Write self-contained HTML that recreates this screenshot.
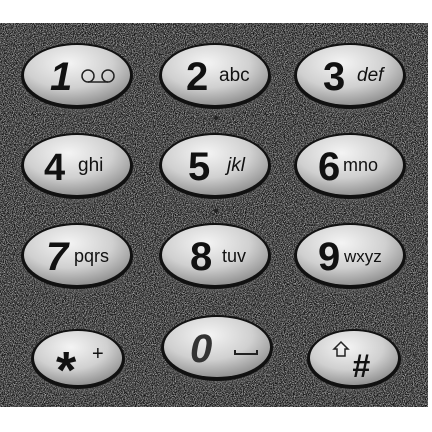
<!DOCTYPE html>
<html><head><style>html,body{margin:0;padding:0;background:#fff;width:432px;height:432px;overflow:hidden}</style></head>
<body>
<svg width="432" height="432" viewBox="0 0 432 432" xmlns="http://www.w3.org/2000/svg" font-family="Liberation Sans, sans-serif">
<defs>
<filter id="n" x="0" y="0" width="100%" height="100%" color-interpolation-filters="sRGB">
<feTurbulence type="fractalNoise" baseFrequency="1.1" numOctaves="2" seed="3"/>
<feColorMatrix type="matrix" values="2.4 0 0 0 -0.85  2.4 0 0 0 -0.85  2.4 0 0 0 -0.85  0 0 0 0 1"/>
</filter>
<radialGradient id="k" cx="0.42" cy="0.3" r="0.75">
<stop offset="0" stop-color="#f4f4f4"/><stop offset="0.55" stop-color="#d0d0d0"/><stop offset="1" stop-color="#8a8a8a"/>
</radialGradient>
<radialGradient id="h" cx="0.5" cy="0.5" r="0.5">
<stop offset="0.7" stop-color="#6a6a6a" stop-opacity="0.6"/><stop offset="1" stop-color="#555" stop-opacity="0"/>
</radialGradient>
</defs>
<rect x="0" y="23" width="428" height="384" fill="#333"/>
<rect x="0" y="23" width="428" height="384" filter="url(#n)" opacity="0.65"/>
<g>
<g><ellipse cx="77" cy="78" rx="64" ry="40" fill="url(#h)"/><ellipse cx="77" cy="76" rx="56" ry="33" fill="#111"/><ellipse cx="77" cy="75" rx="53" ry="30" fill="url(#k)"/>
<text x="50" y="90" font-size="40" font-style="italic" font-weight="bold" fill="#111">1</text>
<circle cx="88" cy="76" r="6" fill="none" stroke="#222" stroke-width="1.5"/><circle cx="108" cy="76" r="6" fill="none" stroke="#222" stroke-width="1.5"/><line x1="88" y1="82" x2="108" y2="82" stroke="#222" stroke-width="1.5"/></g>
<g><ellipse cx="215" cy="78" rx="64" ry="40" fill="url(#h)"/><ellipse cx="215" cy="76" rx="56" ry="33" fill="#111"/><ellipse cx="215" cy="75" rx="53" ry="30" fill="url(#k)"/>
<text x="186" y="90" font-size="40" font-weight="bold" fill="#111">2</text><text x="219" y="81" font-size="19" fill="#111">abc</text></g>
<g><ellipse cx="350" cy="78" rx="64" ry="40" fill="url(#h)"/><ellipse cx="350" cy="76" rx="56" ry="33" fill="#111"/><ellipse cx="350" cy="75" rx="53" ry="30" fill="url(#k)"/>
<text x="323" y="90" font-size="40" font-weight="bold" fill="#111">3</text><text x="357" y="81" font-size="19" font-style="italic" fill="#111">def</text></g>

<g><ellipse cx="77" cy="168" rx="64" ry="40" fill="url(#h)"/><ellipse cx="77" cy="166" rx="56" ry="33" fill="#111"/><ellipse cx="77" cy="165" rx="53" ry="30" fill="url(#k)"/>
<text x="44" y="180" font-size="38" font-weight="bold" fill="#111">4</text><text x="78" y="171" font-size="19" fill="#111">ghi</text></g>
<g><ellipse cx="215" cy="168" rx="64" ry="40" fill="url(#h)"/><ellipse cx="215" cy="166" rx="56" ry="33" fill="#111"/><ellipse cx="215" cy="165" rx="53" ry="30" fill="url(#k)"/>
<text x="188" y="180" font-size="40" font-weight="bold" fill="#111">5</text><text x="227" y="171" font-size="19" font-style="italic" fill="#111">jkl</text></g>
<g><ellipse cx="350" cy="168" rx="64" ry="40" fill="url(#h)"/><ellipse cx="350" cy="166" rx="56" ry="33" fill="#111"/><ellipse cx="350" cy="165" rx="53" ry="30" fill="url(#k)"/>
<text x="318" y="180" font-size="40" font-weight="bold" fill="#111">6</text><text x="343" y="171" font-size="18" fill="#111">mno</text></g>

<g><ellipse cx="77" cy="258" rx="64" ry="40" fill="url(#h)"/><ellipse cx="77" cy="256" rx="56" ry="33" fill="#111"/><ellipse cx="77" cy="255" rx="53" ry="30" fill="url(#k)"/>
<text x="46" y="270" font-size="40" font-weight="bold" font-style="italic" fill="#111">7</text><text x="74" y="262" font-size="18" fill="#111">pqrs</text></g>
<g><ellipse cx="215" cy="258" rx="64" ry="40" fill="url(#h)"/><ellipse cx="215" cy="256" rx="56" ry="33" fill="#111"/><ellipse cx="215" cy="255" rx="53" ry="30" fill="url(#k)"/>
<text x="190" y="270" font-size="40" font-weight="bold" fill="#111">8</text><text x="222" y="262" font-size="18" fill="#111">tuv</text></g>
<g><ellipse cx="350" cy="258" rx="64" ry="40" fill="url(#h)"/><ellipse cx="350" cy="256" rx="56" ry="33" fill="#111"/><ellipse cx="350" cy="255" rx="53" ry="30" fill="url(#k)"/>
<text x="318" y="270" font-size="40" font-weight="bold" fill="#111">9</text><text x="344" y="262" font-size="17" fill="#111">wxyz</text></g>

<g><ellipse cx="78" cy="361" rx="54" ry="36" fill="url(#h)"/><ellipse cx="78" cy="359" rx="47" ry="30" fill="#111"/><ellipse cx="78" cy="358" rx="44" ry="27" fill="url(#k)"/>
<text x="56" y="388" font-size="52" font-weight="bold" fill="#111">*</text><text x="92" y="360" font-size="20" fill="#111">+</text></g>
<g><ellipse cx="217" cy="350" rx="64" ry="40" fill="url(#h)"/><ellipse cx="217" cy="348" rx="56" ry="33" fill="#111"/><ellipse cx="217" cy="347" rx="53" ry="30" fill="url(#k)"/>
<text x="190" y="362" font-size="40" font-weight="bold" font-style="italic" fill="#333">0</text>
<path d="M235 350 V354 H257 V350" fill="none" stroke="#222" stroke-width="2"/></g>
<g><ellipse cx="354" cy="361" rx="54" ry="36" fill="url(#h)"/><ellipse cx="354" cy="359" rx="47" ry="30" fill="#111"/><ellipse cx="354" cy="358" rx="44" ry="27" fill="url(#k)"/>
<path d="M334 349 L341 342 L348 349 H345 V356 H337 V349 Z" fill="none" stroke="#222" stroke-width="1.5"/>
<text x="352" y="377" font-size="32" font-weight="bold" font-style="italic" fill="#111">#</text></g>
</g>
<circle cx="216" cy="118" r="2" fill="#222"/><circle cx="216" cy="211" r="2" fill="#222"/>
</svg>
</body></html>
